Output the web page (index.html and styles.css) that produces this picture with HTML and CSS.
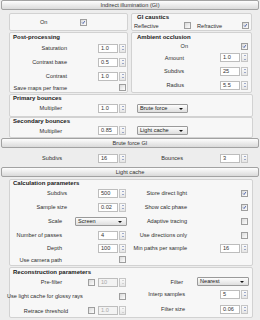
FILE: index.html
```html
<!DOCTYPE html>
<html lang="en">
<head>
  <meta charset="UTF-8" />
  <meta name="viewport" content="width=device-width, initial-scale=1.0" />
  <title>Indirect illumination (GI)</title>
  <link rel="stylesheet" href="styles.css">
</head>
<body>

  <!-- Indirect illumination rollout -->
  <div class="roll">
    <div class="rhead">Indirect illumination (GI)</div>
    <div class="rbody gi">
      <div class="cols">
        <div class="col">
          <div class="grp on-grp">
            <span class="on-lbl">On</span>
            <span class="cb on"><svg viewBox="0 0 7 7"><path d="M1.6 3.6 L2.9 4.9 L5.3 1.6"/></svg></span>
          </div>
          <div class="grp">
            <div class="gtitle">Post-processing</div>
            <div class="row"><span class="lbl">Saturation</span><span class="ctl"><span class="in">1.0</span><span class="spin"></span></span></div>
            <div class="row"><span class="lbl">Contrast base</span><span class="ctl"><span class="in">0.5</span><span class="spin"></span></span></div>
            <div class="row"><span class="lbl">Contrast</span><span class="ctl"><span class="in">1.0</span><span class="spin"></span></span></div>
            <div class="row h9"><span class="lbl">Save maps per frame</span><span class="ctl"><span class="cb"></span></span></div>
          </div>
        </div>
        <div class="col right">
          <div class="grp caus">
            <div class="gtitle t7">GI caustics</div>
            <div class="refl">
              <span class="rf-a">Reflective</span>
              <span class="cb"></span>
              <span class="rf-b">Refractive</span>
              <span class="cb on"><svg viewBox="0 0 7 7"><path d="M1.6 3.6 L2.9 4.9 L5.3 1.6"/></svg></span>
            </div>
          </div>
          <div class="grp">
            <div class="gtitle">Ambient occlusion</div>
            <div class="row h10"><span class="lbl on-r">On</span><span class="ctl"><span class="cb on"><svg viewBox="0 0 7 7"><path d="M1.6 3.6 L2.9 4.9 L5.3 1.6"/></svg></span></span></div>
            <div class="row h13"><span class="lbl ra">Amount</span><span class="ctl"><span class="in">1.0</span><span class="spin"></span></span></div>
            <div class="row"><span class="lbl ra">Subdivs</span><span class="ctl"><span class="in">25</span><span class="spin"></span></span></div>
            <div class="row"><span class="lbl ra">Radius</span><span class="ctl"><span class="in">5.5</span><span class="spin"></span></span></div>
          </div>
        </div>
      </div>

      <div class="grp full prim">
        <div class="gtitle t6">Primary bounces</div>
        <div class="cols">
          <div class="col">
            <div class="row"><span class="lbl n">Multiplier</span><span class="ctl"><span class="in">1.0</span><span class="spin"></span></span></div>
          </div>
          <div class="col right">
            <div class="row"><span class="dd lead">Brute force</span></div>
          </div>
        </div>
      </div>

      <div class="grp full">
        <div class="gtitle t6">Secondary bounces</div>
        <div class="cols">
          <div class="col">
            <div class="row h13"><span class="lbl n">Multiplier</span><span class="ctl"><span class="in">0.85</span><span class="spin"></span></span></div>
          </div>
          <div class="col right">
            <div class="row h13"><span class="dd lead">Light cache</span></div>
          </div>
        </div>
      </div>
    </div>
  </div>

  <!-- Brute force rollout -->
  <div class="roll">
    <div class="rhead">Brute force GI</div>
    <div class="rbody">
      <div class="grp full bare">
        <div class="cols">
          <div class="col">
            <div class="row"><span class="lbl n">Subdivs</span><span class="ctl"><span class="in">16</span><span class="spin"></span></span></div>
          </div>
          <div class="col right">
            <div class="row"><span class="lbl rb">Bounces</span><span class="ctl"><span class="in">3</span><span class="spin"></span></span></div>
          </div>
        </div>
      </div>
    </div>
  </div>

  <!-- Light cache rollout -->
  <div class="roll lc">
    <div class="rhead">Light cache</div>
    <div class="rbody">
      <div class="grp full calc">
        <div class="gtitle t6">Calculation parameters</div>
        <div class="cols">
          <div class="col">
            <div class="row"><span class="lbl">Subdivs</span><span class="ctl"><span class="in">500</span><span class="spin"></span></span></div>
            <div class="row"><span class="lbl">Sample size</span><span class="ctl"><span class="in">0.02</span><span class="spin"></span></span></div>
            <div class="row"><span class="lbl n">Scale</span><span class="ctl"><span class="dd wide">Screen</span></span></div>
            <div class="row"><span class="lbl n">Number of passes</span><span class="ctl"><span class="in">4</span><span class="spin"></span></span></div>
            <div class="row h12"><span class="lbl n">Depth</span><span class="ctl"><span class="in">100</span><span class="spin"></span></span></div>
            <div class="row h11"><span class="lbl n">Use camera path</span><span class="ctl"><span class="cb"></span></span></div>
          </div>
          <div class="col right">
            <div class="row"><span class="lbl rl">Store direct light</span><span class="ctl"><span class="cb on"><svg viewBox="0 0 7 7"><path d="M1.6 3.6 L2.9 4.9 L5.3 1.6"/></svg></span></span></div>
            <div class="row"><span class="lbl rl">Show calc phase</span><span class="ctl"><span class="cb on"><svg viewBox="0 0 7 7"><path d="M1.6 3.6 L2.9 4.9 L5.3 1.6"/></svg></span></span></div>
            <div class="row"><span class="lbl rl">Adaptive tracing</span><span class="ctl"><span class="cb"></span></span></div>
            <div class="row"><span class="lbl rl">Use directions only</span><span class="ctl"><span class="cb"></span></span></div>
            <div class="row h12"><span class="lbl rl">Min paths per sample</span><span class="ctl"><span class="in">16</span><span class="spin"></span></span></div>
          </div>
        </div>
      </div>

      <div class="grp full recon">
        <div class="gtitle">Reconstruction parameters</div>
        <div class="cols">
          <div class="col">
            <div class="row h12"><span class="lbl n">Pre-filter</span><span class="ctl"><span class="cb pre"></span><span class="in off">10</span><span class="spin off"></span></span></div>
            <div class="row h16"><span class="lbl w">Use light cache for glossy rays</span><span class="ctl"><span class="cb"></span></span></div>
            <div class="row h13"><span class="lbl rt">Retrace threshold</span><span class="ctl"><span class="cb pre"></span><span class="in off">1.0</span><span class="spin off"></span></span></div>
          </div>
          <div class="col right">
            <div class="row h11"><span class="lbl rb">Filter</span><span class="ctl"><span class="dd wide">Nearest</span></span></div>
            <div class="row"><span class="lbl rf">Interp samples</span><span class="ctl"><span class="in">5</span><span class="spin"></span></span></div>
            <div class="row h16"><span class="lbl rf">Filter size</span><span class="ctl"><span class="in">0.06</span><span class="spin"></span></span></div>
          </div>
        </div>
      </div>
    </div>
  </div>

</body>
</html>
```

FILE: styles.css
```css
* {
  box-sizing: border-box;
}
body {
  margin: 0;
  width: 260px;
  height: 320px;
  overflow: hidden;
  background-color: #ededed;
  color: #2e2e2e;
  font-family: "Liberation Sans", Arial, sans-serif;
  font-size: 5.6px;
  white-space: nowrap;
}
.roll {
  margin: 0 1px;
}
.rhead {
  height: 10px;
  line-height: 8px;
  border: 1px solid #a2a2a2;
  border-radius: 2px;
  background: linear-gradient(#fdfdfd, #dadada);
  text-align: center;
  color: #333;
}
.rbody {
  padding: 0 6px 0 8px;
}
.gi {
  padding-top: 3px;
}
.lc .rbody {
  padding-top: 2px;
}
.lc {
  margin-top: 1px;
}
.cols {
  display: grid;
  grid-template-columns: 119px 121px;
  column-gap: 3px;
}
.col {
  display: flex;
  flex-direction: column;
  gap: 1px;
}
.grp {
  border: 1px solid #d2d2d2;
  border-radius: 2px;
  background-color: #f7f7f7;
}
.grp.full .cols {
  grid-template-columns: 117px 119px;
  column-gap: 5px;
}
.grp.full .col {
  gap: 0;
}
.grp.bare {
  margin-top: 2px;
  border-color: transparent;
  background-color: transparent;
}
.prim {
  margin-top: 1px;
  padding-bottom: 1px;
}
.recon {
  margin-top: 1px;
}
.gtitle {
  height: 8px;
  line-height: 8px;
  padding-left: 3px;
  font-size: 6px;
  font-weight: bold;
  color: #202020;
}
.right .gtitle {
  padding-left: 5px;
}
.gtitle.t7 {
  height: 7px;
  line-height: 7px;
}
.gtitle.t6 {
  height: 6px;
  line-height: 6px;
}

/* rows */
.row {
  display: flex;
  align-items: center;
  height: 14px;
}
.row.h9 { height: 9px; }
.row.h10 { height: 10px; }
.row.h11 { height: 11px; }
.row.h12 { height: 12px; }
.row.h13 { height: 13px; }
.row.h16 { height: 16px; }
.lbl {
  flex: none;
  width: 57px;
  text-align: right;
}
.lbl.n { width: 52px; }
.lbl.rt { width: 58px; }
.lbl.w { width: 75px; margin-left: -3px; }
.lbl.rl { width: 55px; }
.lbl.ra { width: 52px; }
.lbl.rb { width: 51px; }
.lbl.rf { width: 53px; }
.lbl.on-r { width: 56px; }
.ctl {
  margin-left: auto;
  display: flex;
  align-items: center;
  gap: 1px;
  padding-right: 1px;
}
.right .ctl {
  padding-right: 3px;
}

/* top "On" and caustics */
.on-grp {
  height: 18px;
  display: flex;
  align-items: center;
  padding-left: 30px;
}
.on-grp .cb {
  margin-left: 33px;
}
.caus {
  height: 18px;
}
.refl {
  display: flex;
  align-items: center;
  height: 9px;
  padding-left: 2px;
}
.rf-a {
  width: 50px;
}
.rf-b {
  width: 45px;
  margin-left: 6px;
}

/* controls */
.in {
  width: 20px;
  height: 9px;
  line-height: 7px;
  padding-left: 2px;
  border: 1px solid #bdbdbd;
  background-color: #fff;
  color: #333;
}
.in.off {
  background-color: #f3f3f3;
  color: #a8a8a8;
}
.spin {
  width: 7px;
  height: 9px;
  border: 1px solid #c6c6c6;
  background: linear-gradient(#fafafa, #e6e6e6);
  display: flex;
  flex-direction: column;
  align-items: center;
  justify-content: space-around;
}
.spin::before {
  content: "";
  border-left: 1.5px solid transparent;
  border-right: 1.5px solid transparent;
  border-bottom: 1.5px solid #4a63a4;
}
.spin::after {
  content: "";
  border-left: 1.5px solid transparent;
  border-right: 1.5px solid transparent;
  border-top: 1.5px solid #4a63a4;
}
.spin.off::before { border-bottom-color: #b8b8b8; }
.spin.off::after { border-top-color: #b8b8b8; }
.cb {
  flex: none;
  width: 7px;
  height: 7px;
  border: 1px solid #9e9e9e;
  background: linear-gradient(135deg, #dadada, #fdfdfd);
  display: block;
}
.cb svg {
  display: block;
  width: 5px;
  height: 5px;
  fill: none;
  stroke: #23409a;
  stroke-width: 1.1;
}
.cb.pre {
  margin-right: 2px;
}
.dd {
  position: relative;
  width: 51px;
  height: 9px;
  line-height: 7px;
  padding-left: 2px;
  border: 1px solid #9a9a9a;
  border-radius: 1px;
  background: linear-gradient(#fdfdfd, #dedede);
  color: #222;
}
.dd.lead {
  margin-left: 5px;
}
.dd.wide {
  width: 52px;
  margin-right: -1px;
}
.dd::after {
  content: "";
  position: absolute;
  right: 4px;
  top: 3px;
  border-left: 2px solid transparent;
  border-right: 2px solid transparent;
  border-top: 2px solid #111;
}
```
